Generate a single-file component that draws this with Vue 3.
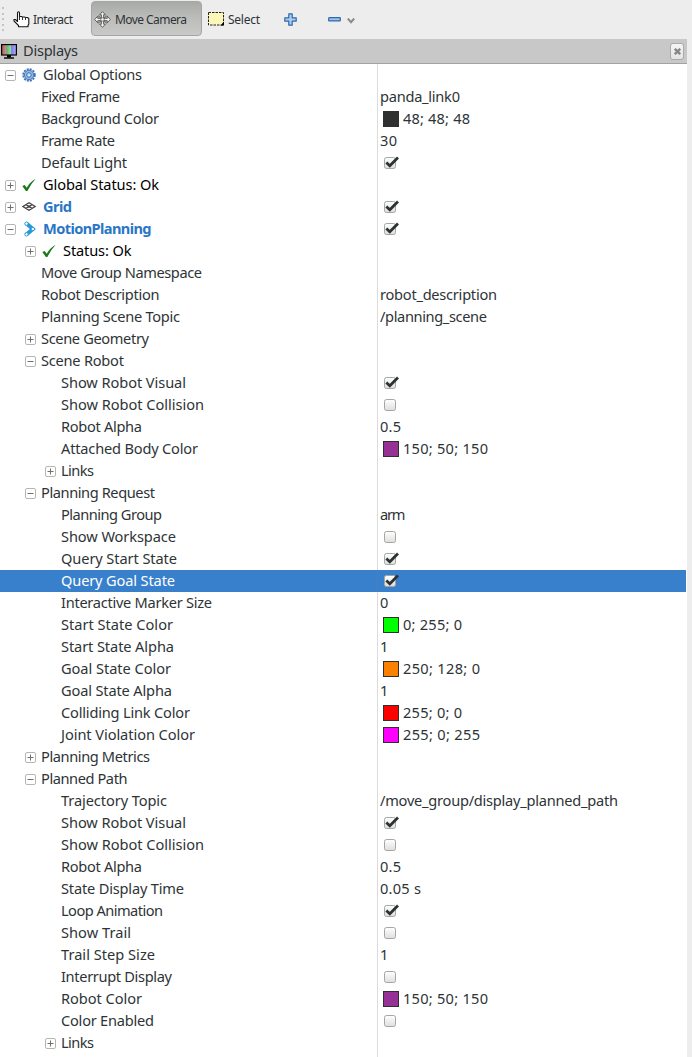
<script setup>
// x: left edge of the label; w: width of the label; vw: width of the value
const rows = [
  { t: 'Global Options', x: 43, w: 99, box: '-', bx: 5, icon: 'gear' },
  { t: 'Fixed Frame', x: 41, w: 79, v: 'panda_link0', vw: 80 },
  { t: 'Background Color', x: 41, w: 118, c: '#303030', v: '48; 48; 48', vw: 67 },
  { t: 'Frame Rate', x: 41, w: 74, v: '30', vw: 17 },
  { t: 'Default Light', x: 41, w: 86, k: 1 },
  { t: 'Global Status: Ok', x: 43, w: 116, box: '+', bx: 5, icon: 'ok', cls: 'black' },
  { t: 'Grid', x: 43, w: 29, box: '+', bx: 5, icon: 'grid', cls: 'display', k: 1 },
  { t: 'MotionPlanning', x: 43, w: 108.5, box: '-', bx: 5, icon: 'motion', cls: 'display', k: 1 },
  { t: 'Status: Ok', x: 63, w: 68.5, box: '+', bx: 25, icon: 'ok', cls: 'black' },
  { t: 'Move Group Namespace', x: 41, w: 161 },
  { t: 'Robot Description', x: 41, w: 118.5, v: 'robot_description', vw: 117 },
  { t: 'Planning Scene Topic', x: 41, w: 139, v: '/planning_scene', vw: 107 },
  { t: 'Scene Geometry', x: 41, w: 108, box: '+', bx: 25 },
  { t: 'Scene Robot', x: 41, w: 83, box: '-', bx: 25 },
  { t: 'Show Robot Visual', x: 61, w: 125, k: 1 },
  { t: 'Show Robot Collision', x: 61, w: 143, k: 0 },
  { t: 'Robot Alpha', x: 61, w: 81, v: '0.5', vw: 21 },
  { t: 'Attached Body Color', x: 61, w: 137, c: '#963296', v: '150; 50; 150', vw: 85 },
  { t: 'Links', x: 61, w: 33, box: '+', bx: 45 },
  { t: 'Planning Request', x: 41, w: 114, box: '-', bx: 25 },
  { t: 'Planning Group', x: 61, w: 101, v: 'arm', vw: 25.5 },
  { t: 'Show Workspace', x: 61, w: 115, k: 0 },
  { t: 'Query Start State', x: 61, w: 116, k: 1 },
  { t: 'Query Goal State', x: 61, w: 114, k: 1, cls: 'selected' },
  { t: 'Interactive Marker Size', x: 61, w: 151, v: '0', vw: 8.5 },
  { t: 'Start State Color', x: 61, w: 112, c: '#00ff00', v: '0; 255; 0', vw: 59 },
  { t: 'Start State Alpha', x: 61, w: 113, v: '1', vw: 8.5 },
  { t: 'Goal State Color', x: 61, w: 110, c: '#fa8000', v: '250; 128; 0', vw: 77 },
  { t: 'Goal State Alpha', x: 61, w: 111, v: '1', vw: 8.5 },
  { t: 'Colliding Link Color', x: 61, w: 129, c: '#ff0000', v: '255; 0; 0', vw: 59 },
  { t: 'Joint Violation Color', x: 61, w: 134, c: '#ff00ff', v: '255; 0; 255', vw: 77 },
  { t: 'Planning Metrics', x: 41, w: 109, box: '+', bx: 25 },
  { t: 'Planned Path', x: 41, w: 86.5, box: '-', bx: 25 },
  { t: 'Trajectory Topic', x: 61, w: 106, v: '/move_group/display_planned_path', vw: 238 },
  { t: 'Show Robot Visual', x: 61, w: 125, k: 1 },
  { t: 'Show Robot Collision', x: 61, w: 143, k: 0 },
  { t: 'Robot Alpha', x: 61, w: 81, v: '0.5', vw: 21 },
  { t: 'State Display Time', x: 61, w: 123, v: '0.05 s', vw: 41 },
  { t: 'Loop Animation', x: 61, w: 102, k: 1 },
  { t: 'Show Trail', x: 61, w: 70, k: 0 },
  { t: 'Trail Step Size', x: 61, w: 94, v: '1', vw: 8.5 },
  { t: 'Interrupt Display', x: 61, w: 111, k: 0 },
  { t: 'Robot Color', x: 61, w: 81, c: '#963296', v: '150; 50; 150', vw: 85 },
  { t: 'Color Enabled', x: 61, w: 93, k: 0 },
  { t: 'Links', x: 61, w: 33, box: '+', bx: 45 },
]

// Tracks a run of text so that it fills the given width
const vFit = {
  mounted(el, { value }) {
    const n = el.textContent.length
    const gap = value - el.getBoundingClientRect().width
    if (n > 1) el.style.letterSpacing = gap / (n - 1) + 'px'
  },
}
</script>

<template>
  <div class="window">
    <header class="toolbar">
      <svg class="grip" width="4" height="32" viewBox="0 0 4 32"><g fill="#c4c4c4"><rect x="1" y="3" width="2" height="2" /><rect x="1" y="9" width="2" height="2" /><rect x="1" y="14" width="2" height="2" /><rect x="1" y="20" width="2" height="2" /><rect x="1" y="25" width="2" height="2" /></g></svg>
      <div class="tool interact">
        <svg width="17" height="17" viewBox="0 0 17 17"><path d="M4.500 11V2Q4.500 .7 5.500 .7T6.500 2V5.500H8.500L9.500 6H11.500L12.500 6.500H14.500L15.800 7.500V13L15 14.500V15.700H5.500V14.500L1 10V8.500H2.500L4.500 10.500" fill="#fff" stroke="#151515" stroke-width="1.100" /><path d="M6.500 5.500V9M9.500 6V9M12.500 6.500V9" stroke="#333" /></svg>
        <span v-fit="40">Interact</span>
      </div>
      <div class="tool camera">
        <svg width="17" height="17" viewBox="0 0 18 18"><path d="M9 .7L12 4H10.200V7.800H14V5.500L17.300 9L14 12.500V10.200H10.200V14H12L9 17.300L6 14H7.800V10.200H4V12.500L.7 9L4 5.500V7.800H7.800V4H6Z" fill="#f4f4f4" stroke="#4b4b4b" stroke-width=".9" /><path d="M4.500 5L13.500 13M13.500 5L4.500 13" stroke="#555" stroke-width="1" /><circle cx="9" cy="9" r="1.900" fill="#eee" stroke="#666" stroke-width=".8" /></svg>
        <span v-fit="72">Move Camera</span>
      </div>
      <div class="tool select">
        <svg width="16" height="14" viewBox="0 0 16 14"><rect x=".5" y=".5" width="15" height="12.500" fill="#fdf6b9" stroke="#222" stroke-dasharray="2.500 1" /><path d="M12.500 13.500L16 9.500V13.500Z" fill="#000" /></svg>
        <span v-fit="32">Select</span>
      </div>
      <svg class="plus" width="13" height="13" viewBox="0 0 13 13"><path d="M4.800 .8H8.200V4.800H12.200V8.200H8.200V12.200H4.800V8.200H.8V4.800H4.800Z" fill="#b1cdec" stroke="#3068ac" stroke-width="1.200" stroke-linejoin="round" /></svg>
      <svg class="minus" width="13" height="5" viewBox="0 0 13 5"><rect x=".7" y=".7" width="11.600" height="3.200" rx=".5" fill="#9fc1e8" stroke="#3068ac" stroke-width="1.200" /></svg>
      <svg class="more" width="8" height="6" viewBox="0 0 8 6"><path d="M.8 .5L4 4.200L7.200 .5" fill="none" stroke="#8a8a88" stroke-width="2" /></svg>
    </header>

    <div class="titlebar">
      <svg width="18" height="17" viewBox="0 0 18 17">
        <defs><linearGradient id="shade" x1="0" y1="0" x2="1" y2="0"><stop offset="0" stop-color="#b25555" /><stop offset=".3" stop-color="#c89090" /><stop offset=".34" stop-color="#58b868" /><stop offset=".63" stop-color="#98dda5" /><stop offset=".67" stop-color="#8080e8" /><stop offset="1" stop-color="#b0b0fa" /></linearGradient></defs>
        <rect x="1.600" y="1.600" width="14.800" height="10.400" fill="url(#shade)" stroke="#050505" stroke-width="1.200" /><path d="M9 12V14.500" stroke="#000" stroke-width="4" /><path d="M4 15H14" stroke="#000" stroke-width="1.400" />
      </svg>
      <span v-fit="55" class="title">Displays</span>
      <button class="close" aria-label="Close"><svg width="7" height="7" viewBox="0 0 7 7"><path d="M.8 .8L6.200 6.200M6.200 .8L.8 6.200" stroke="#868686" stroke-width="2.300" /></svg></button>
    </div>

    <main class="tree">
      <div v-for="(r, i) in rows" :key="i" class="row" :class="r.cls">
        <div class="name">
          <svg v-if="r.box" class="expander" :style="{ marginLeft: r.bx + 'px' }" width="11" height="11" viewBox="0 0 11 11"><rect x=".5" y=".5" width="10" height="10" rx="1.500" fill="#fff" stroke="#b5b5b2" /><path :d="r.box === '+' ? 'M2.500 5.500H8.500M5.500 2.500V8.500' : 'M2.500 5.500H8.500'" stroke="#70706e" /></svg>
          <span class="slot" :style="{ width: r.x - (r.box ? r.bx + 11 : 0) + 'px' }">
            <svg v-if="r.icon === 'gear'" class="icon" width="14" height="14" viewBox="0 0 14 14"><circle cx="7" cy="7" r="5.800" fill="none" stroke="#3b70b2" stroke-width="1.800" stroke-dasharray="2 1.037" /><circle cx="7" cy="7" r="4.700" fill="#90b7e4" stroke="#4378b9" /><circle cx="7" cy="7" r="2.300" fill="#b9d3f0" stroke="#4378b9" /><circle cx="7" cy="7" r=".8" fill="#fff" /></svg>
            <svg v-else-if="r.icon === 'ok'" class="icon" width="14" height="14" viewBox="0 0 14 14"><path d="M.3 8L2.700 7L4.700 9.800Q8 4 13.700 .8Q8.800 6 5.400 13H3.900Z" fill="#1b781b" /></svg>
            <svg v-else-if="r.icon === 'grid'" class="icon" width="14" height="14" viewBox="0 0 14 14"><path d="M.9 6.500L7 2.700L13.100 6.500L7 10.300ZM4 4.600L10 8.400M10 4.600L4 8.400" fill="none" stroke="#444" stroke-width="1.250" /></svg>
            <svg v-else-if="r.icon === 'motion'" class="icon motion" width="12" height="16" viewBox="0 0 12 16"><path d="M2.500 2.500L8.800 8L2.500 13.500" fill="none" stroke="#249bd8" stroke-width="4" /><g fill="#fff" stroke="#249bd8"><circle cx="2.500" cy="2.700" r="1.700" /><circle cx="8.800" cy="8" r="1.700" /><circle cx="2.500" cy="13.300" r="1.700" /></g></svg>
          </span>
          <span v-fit="r.w" class="label">{{ r.t }}</span>
        </div>
        <div class="value">
          <svg v-if="r.k !== undefined" class="check" width="17" height="16" viewBox="0 0 17 16">
            <defs><linearGradient :id="'face' + i" x1="0" y1="0" x2="0" y2="1"><stop offset="0" stop-color="#fff" /><stop offset="1" stop-color="#dededd" /></linearGradient></defs>
            <rect x="1.500" y="3.500" width="11" height="11" rx="2" :fill="`url(#face${i})`" stroke="#a5a5a3" /><path v-if="r.k" d="M3.300 8.500L6.800 11.800L15 3.500" fill="none" stroke="#2c3234" stroke-width="2.700" />
          </svg>
          <span v-if="r.c" class="swatch" :style="{ background: r.c }"></span>
          <span v-if="r.v" v-fit="r.vw" class="label">{{ r.v }}</span>
        </div>
      </div>
    </main>
  </div>
</template>

<style>
body { margin: 0; background: #ededed; overflow: hidden; }
</style>

<style scoped>
.window { width: 692px; height: 1057px; overflow: hidden; background: #ededed; font: 14.6px "Noto Sans", sans-serif; color: #2e3436; }
.toolbar { height: 39px; display: flex; align-items: flex-start; font-size: 12px; }
.toolbar svg { display: block; flex: none; }
.grip { margin: 4px 0 0 1px; }
.tool { display: flex; align-items: center; height: 34px; white-space: nowrap; flex: none; box-sizing: border-box; margin-top: 2px; }
.interact { width: 78px; margin-left: 8px; gap: 3px; }
.camera { width: 111px; height: 35px; margin: 1px 0 0; padding: 1px 0 0 2px; gap: 4px; border: 1px solid #a5a6a4; border-radius: 4px; background: linear-gradient(#a8aaa7, #bbbcba 45%, #c9c9c8); }
.select { width: 58px; margin-left: 6px; gap: 4px; }
.plus { margin: 13px 0 0 17.5px; }
.minus { margin: 17px 0 0 31px; }
.more { margin: 18px 0 0 6px; }
.titlebar { width: 687px; height: 25px; box-sizing: border-box; display: flex; align-items: center; background: #c8c8c8; border-bottom: 1px solid #a2a2a2; }
.titlebar > svg { margin-top: 1px; }
.title { margin: -2px 0 0 5px; white-space: nowrap; }
.close { width: 14px; height: 17px; margin: 0 3px 0 auto; padding: 0; border: 1px solid #aaa; border-radius: 3px; background: linear-gradient(#f5f5f5, #e4e4e4); display: flex; align-items: center; justify-content: center; }
.tree { width: 687px; height: 993px; overflow: hidden; background: linear-gradient(#dcdcdc, #dcdcdc) 377px 0 / 1px 100% no-repeat #fff; }
.row { width: 686px; height: 22px; display: flex; }
.name { width: 378px; display: flex; align-items: center; }
.expander { display: block; flex: none; margin-top: 1px; }
.slot { flex: none; height: 22px; display: flex; align-items: center; }
.icon { display: block; margin-left: 6px; }
.motion { margin-left: 8px; }
.label { white-space: nowrap; line-height: 22px; margin-top: -2px; }
.value { height: 22px; display: flex; align-items: center; padding-left: 2px; }
.check { display: block; margin: -2px 0 0 3px; }
.swatch { width: 16px; height: 16px; box-sizing: border-box; border: 1px solid #303030; margin: 0 4px 0 3px; }
.black { color: #000; }
.display .name { color: #2a76c6; font-weight: 700; }
.selected { background: linear-gradient(#497fbd, #497fbd) 377px 0 / 1px 100% no-repeat #3880cc; }
.selected .name { color: #fff; }
</style>
